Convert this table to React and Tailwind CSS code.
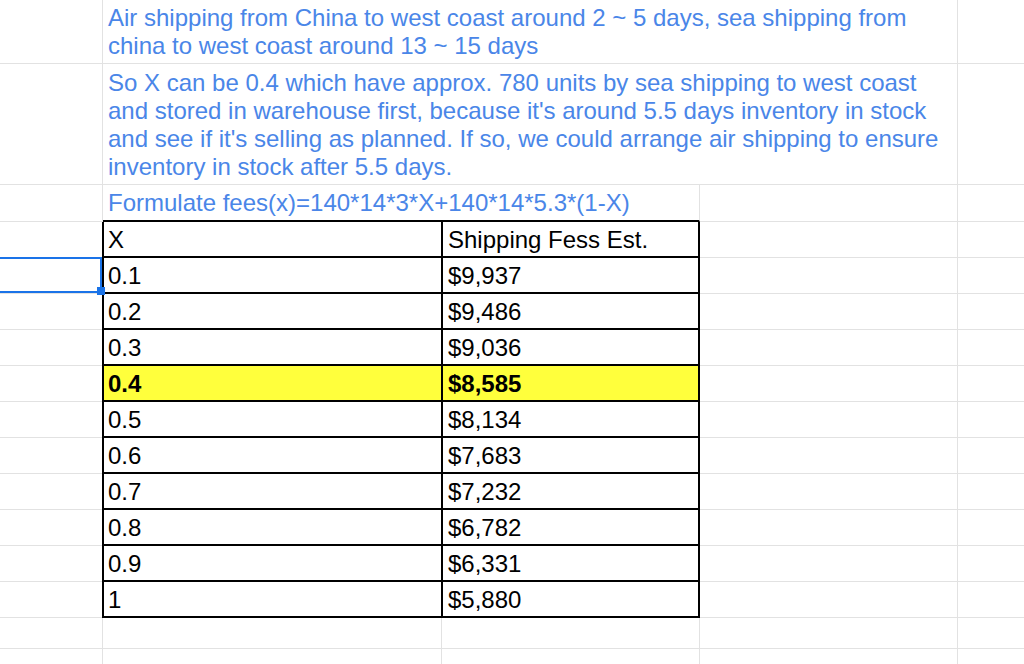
import React from "react";

const rows = [
  ["0.1", "$9,937"],
  ["0.2", "$9,486"],
  ["0.3", "$9,036"],
  ["0.4", "$8,585", true],
  ["0.5", "$8,134"],
  ["0.6", "$7,683"],
  ["0.7", "$7,232"],
  ["0.8", "$6,782"],
  ["0.9", "$6,331"],
  ["1", "$5,880"],
];

function TableRow({ a, b, hl, bold, selected }) {
  const bg = hl ? "bg-[#ffff3c]" : "bg-white";
  const fw = bold ? "font-bold" : "font-normal";
  return (
    <div className="flex h-[36px]">
      <div className="relative z-10 w-[102px] shrink-0 border-b border-[#e2e2e2]">
        {selected && (
          <>
            <div className="absolute left-[-4px] top-[-1px] h-[36px] w-[106px] border-2 border-[#1a73e8]" />
            <div className="absolute left-[97px] top-[29px] h-[8px] w-[8px] bg-[#1a73e8]" />
          </>
        )}
      </div>
      <div className={`flex w-[341px] shrink-0 items-end border-b-2 border-l-2 border-r-2 border-black pb-[2px] pl-[4px] text-black ${bg} ${fw}`}>
        {a}
      </div>
      <div className={`flex w-[257px] shrink-0 items-end border-b-2 border-r-2 border-black pb-[2px] pl-[5px] text-black ${bg} ${fw}`}>
        {b}
      </div>
      <div className="w-[258px] shrink-0 border-b border-r border-[#e2e2e2]" />
      <div className="flex-1 border-b border-[#e2e2e2]" />
    </div>
  );
}

function EmptyRow({ h }) {
  return (
    <div className={`flex ${h}`}>
      <div className="w-[103px] shrink-0 border-b border-r border-[#e2e2e2]" />
      <div className="w-[339px] shrink-0 border-b border-r border-[#e2e2e2]" />
      <div className="w-[258px] shrink-0 border-b border-r border-[#e2e2e2]" />
      <div className="w-[258px] shrink-0 border-b border-r border-[#e2e2e2]" />
      <div className="flex-1 border-b border-[#e2e2e2]" />
    </div>
  );
}

export default function App() {
  return (
    <div
      className="h-[664px] w-[1024px] overflow-hidden bg-white text-[24px] leading-[28px]"
      style={{ fontFamily: '"Liberation Sans", Arial, sans-serif' }}
    >
      {/* Row 1 */}
      <div className="flex h-[64px]">
        <div className="w-[103px] shrink-0 border-b border-r border-[#e2e2e2]" />
        <div className="flex w-[855px] shrink-0 items-end whitespace-nowrap border-b border-r border-[#e2e2e2] pb-[3px] pl-[5px] text-[#4a86e8]">
          <div>
            Air shipping from China to west coast around 2 ~ 5 days, sea shipping from
            <br />
            china to west coast around 13 ~ 15 days
          </div>
        </div>
        <div className="flex-1 border-b border-[#e2e2e2]" />
      </div>

      {/* Row 2 */}
      <div className="flex h-[121px]">
        <div className="w-[103px] shrink-0 border-b border-r border-[#e2e2e2]" />
        <div className="flex w-[855px] shrink-0 items-end whitespace-nowrap border-b border-r border-[#e2e2e2] pb-[3px] pl-[5px] text-[#4a86e8]">
          <div>
            So X can be 0.4 which have approx. 780 units by sea shipping to west coast
            <br />
            and stored in warehouse first, because it's around 5.5 days inventory in stock
            <br />
            and see if it's selling as planned. If so, we could arrange air shipping to ensure
            <br />
            inventory in stock after 5.5 days.
          </div>
        </div>
        <div className="flex-1 border-b border-[#e2e2e2]" />
      </div>

      {/* Row 3 */}
      <div className="flex h-[37px]">
        <div className="w-[103px] shrink-0 border-b border-r border-[#e2e2e2]" />
        <div className="flex w-[597px] shrink-0 items-end whitespace-nowrap border-b-2 border-r border-b-black border-r-[#e2e2e2] pb-[3px] pl-[5px] text-[#4a86e8]">
          Formulate fees(x)=140*14*3*X+140*14*5.3*(1-X)
        </div>
        <div className="w-[258px] shrink-0 border-b border-r border-[#e2e2e2]" />
        <div className="flex-1 border-b border-[#e2e2e2]" />
      </div>

      {/* Table */}
      <TableRow a="X" b="Shipping Fess Est." />
      {rows.map((r, i) => (
        <TableRow key={r[0]} a={r[0]} b={r[1]} hl={r[2]} bold={r[2]} selected={i === 0} />
      ))}

      <EmptyRow h="h-[31px]" />
      <EmptyRow h="h-[36px]" />
    </div>
  );
}
